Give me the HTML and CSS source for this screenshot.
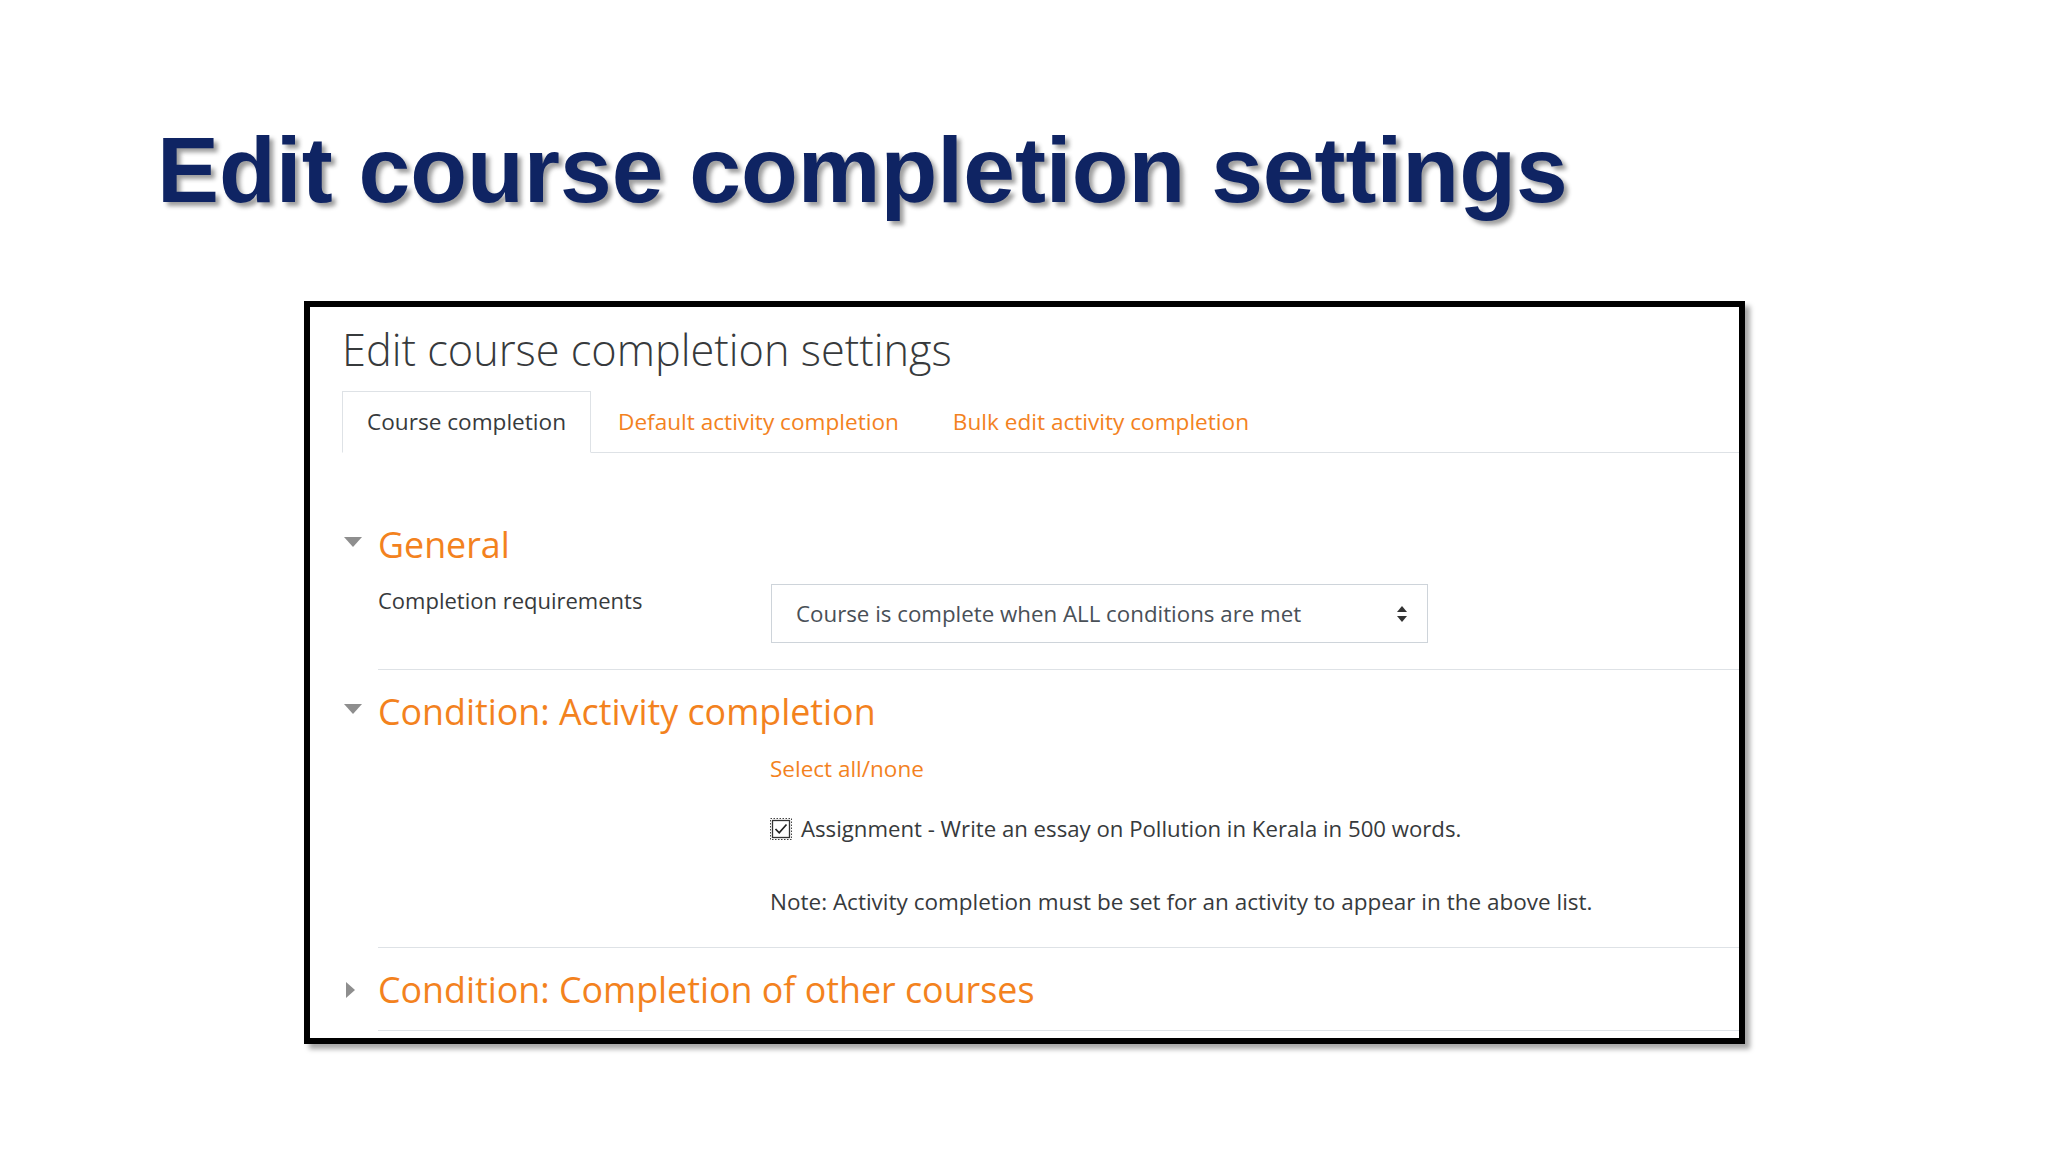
FILE: index.html
```html
<!DOCTYPE html>
<html lang="en">
<head>
<meta charset="utf-8">
<title>Edit course completion settings</title>
<link rel="stylesheet" href="styles.css">
</head>
<body>
<main class="slide">
  <h1 class="slide-title">Edit course completion settings</h1>

  <section class="shot">
    <h2 class="page-heading">Edit course completion settings</h2>

    <nav class="tabs">
      <a class="tab active">Course completion</a>
      <a class="tab">Default activity completion</a>
      <a class="tab">Bulk edit activity completion</a>
    </nav>

    <div class="fieldset first">
      <span class="toggle">
        <svg width="18" height="10" viewBox="0 0 18 10"><polygon points="0,0 18,0 9,10" fill="#8e8e8e"/></svg>
      </span>
      <h3 class="legend">General</h3>
      <div class="fs-body">
        <div class="form-row">
          <label class="form-label">Completion requirements</label>
          <div class="select">
            <span>Course is complete when ALL conditions are met</span>
            <svg width="10" height="16" viewBox="0 0 10 16"><polygon points="5,0 10,6 0,6" fill="#333"/><polygon points="0,10 10,10 5,16" fill="#333"/></svg>
          </div>
        </div>
        <div class="rule"></div>
      </div>
    </div>

    <div class="fieldset">
      <span class="toggle">
        <svg width="18" height="10" viewBox="0 0 18 10"><polygon points="0,0 18,0 9,10" fill="#8e8e8e"/></svg>
      </span>
      <h3 class="legend">Condition: Activity completion</h3>
      <div class="fs-body">
        <div class="indent">
          <a class="link">Select all/none</a>
          <div class="check-row">
            <svg class="checkbox" width="22" height="22" viewBox="0 0 22 22">
              <rect x="0.5" y="0.5" width="21" height="21" fill="none" stroke="#444" stroke-width="1" stroke-dasharray="1.5 1.5"/>
              <rect x="2.5" y="2.5" width="17" height="17" fill="#fff" stroke="#333" stroke-width="1.3"/>
              <path d="M5.5 11 L9.2 14.8 L16.5 6.5" fill="none" stroke="#222" stroke-width="1.7"/>
            </svg>
            <span>Assignment - Write an essay on Pollution in Kerala in 500 words.</span>
          </div>
          <p class="note">Note: Activity completion must be set for an activity to appear in the above list.</p>
        </div>
        <div class="rule"></div>
      </div>
    </div>

    <div class="fieldset">
      <span class="toggle collapsed">
        <svg width="9" height="16" viewBox="0 0 9 16"><polygon points="0,0 9,8 0,16" fill="#8e8e8e"/></svg>
      </span>
      <h3 class="legend">Condition: Completion of other courses</h3>
      <div class="fs-body">
        <div class="rule"></div>
      </div>
    </div>
  </section>
</main>
</body>
</html>
```

FILE: styles.css
```css
html, body {
  margin: 0;
  padding: 0;
  background: #ffffff;
}

.slide {
  width: 2048px;
  height: 1152px;
  padding-top: 119px;
  box-sizing: border-box;
}

.slide-title {
  margin: 0 0 0 157px;
  font-family: "Liberation Sans", Arial, sans-serif;
  font-weight: 700;
  font-size: 93px;
  line-height: 102px;
  color: #0f2463;
  text-shadow: 4px 4px 4px rgba(40, 40, 40, 0.45);
  white-space: nowrap;
}

.shot {
  margin: 80px 0 0 304px;
  width: 1441px;
  box-sizing: border-box;
  border: 6px solid #000;
  background: #fff;
  box-shadow: 5px 5px 5px rgba(0, 0, 0, 0.35);
  padding: 18px 0 7px 32px;
  font-family: "Open Sans", "Noto Sans", sans-serif;
  color: #373a3c;
  overflow: hidden;
}

.page-heading {
  margin: 0;
  font-weight: 300;
  font-size: 43.3px;
  line-height: 50px;
  color: #373a3c;
  white-space: nowrap;
}

.tabs {
  margin-top: 16px;
  display: flex;
  border-bottom: 1px solid #dee2e6;
}

.tab {
  font-size: 22.6px;
  line-height: 33px;
  padding: 13px 25px 14px;
  border: 1px solid transparent;
  margin-bottom: -1px;
  color: #f3821e;
  white-space: nowrap;
}

.tab + .tab {
  padding-left: 26px;
  padding-right: 26px;
}

.tab.active {
  color: #373a3c;
  background: #fff;
  border-color: #dee2e6 #dee2e6 #fff;
  padding-left: 24px;
  padding-right: 24px;
}

.fieldset {
  display: grid;
  grid-template-columns: 36px 1fr;
  margin-top: 21px;
}

.fieldset.first {
  margin-top: 71px;
}

.toggle {
  grid-column: 1;
  grid-row: 1;
  align-self: start;
  margin: 13px 0 0 2px;
  line-height: 0;
}

.toggle.collapsed {
  margin: 13px 0 0 4px;
}

.legend {
  grid-column: 2;
  grid-row: 1;
  margin: 0;
  font-weight: 400;
  font-size: 35.8px;
  line-height: 41px;
  color: #f3821e;
  white-space: nowrap;
}

.fs-body {
  grid-column: 2;
  grid-row: 2;
}

.form-row {
  margin-top: 19px;
  display: flex;
  align-items: flex-start;
}

.form-label {
  width: 393px;
  flex: none;
  font-size: 22px;
  line-height: 33px;
}

.select {
  width: 657px;
  height: 59px;
  box-sizing: border-box;
  border: 1px solid #ced4da;
  padding: 0 20px 0 24px;
  display: flex;
  align-items: center;
  justify-content: space-between;
  font-size: 22.3px;
  color: #495057;
  white-space: nowrap;
}

.rule {
  height: 1px;
  background: #dee2e6;
  margin-top: 20px;
}

.form-row + .rule {
  margin-top: 26px;
}

.indent {
  margin-left: 392px;
  padding-top: 20px;
  font-size: 22.5px;
  line-height: 33px;
}

.link {
  display: block;
  color: #f3821e;
}

.check-row {
  margin-top: 27px;
  display: flex;
  align-items: center;
  gap: 9px;
  font-size: 22.2px;
  white-space: nowrap;
}

.checkbox {
  flex: none;
}

.note {
  margin: 40px 0 0;
  white-space: nowrap;
}

.indent + .rule {
  margin-top: 29px;
}
```
